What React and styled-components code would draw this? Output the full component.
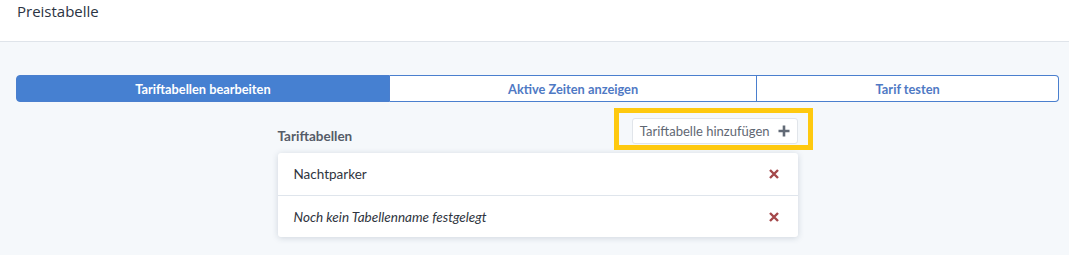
import React from 'react'
import styled, { createGlobalStyle } from 'styled-components'

const Global = createGlobalStyle`
  body {
    margin: 0;
    background: #f5f8fb;
    font-family: Lato, 'Open Sans', sans-serif;
  }
`

const tabs = ['Tariftabellen bearbeiten', 'Aktive Zeiten anzeigen', 'Tarif testen']

const rows = [
  { name: 'Nachtparker' },
  { name: 'Noch kein Tabellenname festgelegt', empty: true },
]

const App = () => {
  return (
    <Page>
      <Global />
      <Header>
        <Title>Preistabelle</Title>
      </Header>
      <Main>
        <Tabs>
          {tabs.map((t, i) => (
            <Tab key={t} active={i === 0}>{t}</Tab>
          ))}
        </Tabs>
        <Column>
          <ListHead>
            <Label>Tariftabellen</Label>
            <Highlight>
              <AddButton>
                Tariftabelle hinzufügen
                <svg width="12" height="12" viewBox="0 0 12 12">
                  <path d="M6 0.5v11M0.5 6h11" stroke="#626a76" strokeWidth="2.6" />
                </svg>
              </AddButton>
            </Highlight>
          </ListHead>
          <Card>
            {rows.map(r => (
              <Row key={r.name}>
                <RowName empty={r.empty}>{r.name}</RowName>
                <svg width="10" height="10" viewBox="0 0 10 10">
                  <path d="M1 1l8 8M9 1l-8 8" stroke="#a4474a" strokeWidth="2.4" />
                </svg>
              </Row>
            ))}
          </Card>
        </Column>
      </Main>
    </Page>
  )
}

export default App

const Page = styled.div`
  min-height: 255px;
  background: #f5f8fb;
`

const Header = styled.header`
  height: 42px;
  background: #fff;
  border-bottom: 1px solid #dfe4ea;
  padding: 0 17px;
  box-sizing: border-box;
`

const Title = styled.h1`
  margin: 0;
  padding-top: 1px;
  font-family: 'Open Sans', sans-serif;
  font-size: 15px;
  font-weight: 400;
  color: #2b3443;
`

const Main = styled.div`
  padding: 33px 10px 0 16px;
`

const Tabs = styled.div`
  display: flex;
  height: 27px;
`

const Tab = styled.div`
  flex: 1 1 auto;
  display: flex;
  align-items: center;
  justify-content: center;
  font-size: 12.8px;
  font-weight: 700;
  color: ${p => (p.active ? '#fff' : '#4f79c4')};
  background: ${p => (p.active ? '#4680d1' : '#fff')};
  border: 1.5px solid #4a7fce;
  border-left-width: 0;
  box-sizing: border-box;

  &:first-child {
    border-left-width: 1.5px;
    border-radius: 4px 0 0 4px;
  }
  &:last-child {
    border-radius: 0 4px 4px 0;
  }
`

const Column = styled.div`
  width: 520px;
  margin: 6px auto 0;
`

const ListHead = styled.div`
  display: flex;
  justify-content: space-between;
  align-items: flex-end;
  margin-bottom: 3px;
`

const Label = styled.div`
  font-size: 13.5px;
  font-weight: 700;
  color: #555c68;
  padding-bottom: 6px;
`

const Highlight = styled.div`
  border: 5px solid #fec90f;
  padding: 5px 10px 1px 13px;
  margin-right: -15px;
`

const AddButton = styled.button`
  display: flex;
  align-items: center;
  gap: 8px;
  height: 26px;
  padding: 0 7px 0 7px;
  background: #fff;
  border: 1px solid #e1e5ea;
  border-radius: 3px;
  font-family: inherit;
  font-size: 13px;
  color: #5f6773;
`

const Card = styled.div`
  background: #fff;
  border-radius: 3px;
  box-shadow: 0 1px 6px rgba(40, 60, 90, 0.18);
`

const Row = styled.div`
  display: flex;
  justify-content: space-between;
  align-items: center;
  height: 42px;
  padding: 0 19px 0 16px;
  & + & {
    height: 41px;
    border-top: 1px solid #dfe5ec;
  }
`

const RowName = styled.span`
  font-size: 13.5px;
  font-style: ${p => (p.empty ? 'italic' : 'normal')};
  color: #2f3540;
`
